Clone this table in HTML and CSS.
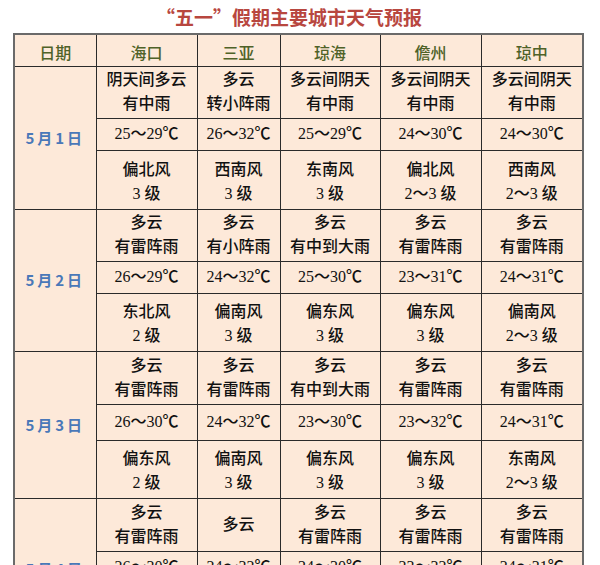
FILE: index.html
```html
<!DOCTYPE html>
<html lang="zh">
<head>
<meta charset="utf-8">
<link rel="stylesheet" href="styles.css">
</head>
<body>
<div class="page">
  <h1 class="title">“五一”假期主要城市天气预报</h1>
  <table class="wx">
    <colgroup>
      <col class="c-date"><col class="c-hk"><col class="c-sy"><col class="c-qh"><col class="c-dz"><col class="c-qz">
    </colgroup>
    <tr class="head">
      <th>日期</th><th>海口</th><th>三亚</th><th>琼海</th><th>儋州</th><th>琼中</th>
    </tr>

    <tr class="w h52">
      <td class="date" rowspan="3">5月1日</td>
      <td>阴天间多云<br>有中雨</td><td>多云<br>转小阵雨</td><td>多云间阴天<br>有中雨</td><td>多云间阴天<br>有中雨</td><td>多云间阴天<br>有中雨</td>
    </tr>
    <tr class="t h32">
      <td>25～29℃</td><td>26～32℃</td><td>25～29℃</td><td>24～30℃</td><td>24～30℃</td>
    </tr>
    <tr class="f h59">
      <td>偏北风<br>3 级</td><td>西南风<br>3 级</td><td>东南风<br>3 级</td><td>偏北风<br>2～3 级</td><td>西南风<br>2～3 级</td>
    </tr>

    <tr class="w h52">
      <td class="date" rowspan="3">5月2日</td>
      <td>多云<br>有雷阵雨</td><td>多云<br>有小阵雨</td><td>多云<br>有中到大雨</td><td>多云<br>有雷阵雨</td><td>多云<br>有雷阵雨</td>
    </tr>
    <tr class="t h32">
      <td>26～29℃</td><td>24～32℃</td><td>25～30℃</td><td>23～31℃</td><td>24～31℃</td>
    </tr>
    <tr class="f h58">
      <td>东北风<br>2 级</td><td>偏南风<br>3 级</td><td>偏东风<br>3 级</td><td>偏东风<br>3 级</td><td>偏南风<br>2～3 级</td>
    </tr>

    <tr class="w h53">
      <td class="date" rowspan="3">5月3日</td>
      <td>多云<br>有雷阵雨</td><td>多云<br>有雷阵雨</td><td>多云<br>有中到大雨</td><td>多云<br>有雷阵雨</td><td>多云<br>有雷阵雨</td>
    </tr>
    <tr class="t h36">
      <td>26～30℃</td><td>24～32℃</td><td>23～30℃</td><td>23～32℃</td><td>24～31℃</td>
    </tr>
    <tr class="f h58">
      <td>偏东风<br>2 级</td><td>偏南风<br>3 级</td><td>偏东风<br>3 级</td><td>偏东风<br>3 级</td><td>东南风<br>2～3 级</td>
    </tr>

    <tr class="w h53">
      <td class="date" rowspan="3">5月4日</td>
      <td>多云<br>有雷阵雨</td><td>多云</td><td>多云<br>有雷阵雨</td><td>多云<br>有雷阵雨</td><td>多云<br>有雷阵雨</td>
    </tr>
    <tr class="t h32">
      <td>26～30℃</td><td>24～32℃</td><td>24～30℃</td><td>23～32℃</td><td>24～31℃</td>
    </tr>
    <tr class="f h58">
      <td>偏东风<br>2 级</td><td>偏南风<br>3 级</td><td>偏东风<br>3 级</td><td>偏东风<br>3 级</td><td>东南风<br>2～3 级</td>
    </tr>
  </table>
</div>
</body>
</html>
```
FILE: styles.css
```css
html, body {
  margin: 0;
  padding: 0;
  background: #ffffff;
}
body {
  font-family: "Liberation Serif", "Noto Sans CJK SC", serif;
  color: #111111;
}
.page {
  width: 600px;
  height: 565px;
  overflow: hidden;
}
.title {
  margin: 0;
  height: 33px;
  box-sizing: border-box;
  padding: 5px 22px 0 0;
  text-align: center;
  font-family: "Noto Sans CJK SC", sans-serif;
  font-size: 19px;
  line-height: 24px;
  font-weight: bold;
  color: #b8473f;
}
.wx {
  margin-left: 13px;
  width: 571px;
  border-collapse: collapse;
  table-layout: fixed;
  background: #fde9d9;
  border: 2px solid #6a6a6a;
}
.c-date { width: 82px; }
.c-hk { width: 101px; }
.c-sy { width: 83px; }
.c-qh { width: 100px; }
.c-dz { width: 101px; }
.c-qz { width: 102px; }
.wx th, .wx td {
  border: 1px solid #2a2a2a;
  padding: 0;
  text-align: center;
  vertical-align: middle;
  font-size: 16px;
  line-height: 24px;
  font-weight: 500;
  white-space: nowrap;
  overflow: hidden;
}
.wx th {
  font-family: "Noto Sans CJK SC", sans-serif;
  color: #4f6228;
  font-weight: 500;
  padding-top: 4px;
}
.head { height: 32px; }
.wx td.date {
  font-family: "Noto Sans CJK SC", sans-serif;
  color: #4a78b8;
  font-size: 15px;
  letter-spacing: 3px;
  font-weight: bold;
}
.f td { padding-top: 4px; }
.h52 { height: 52px; }
.h53 { height: 53px; }
.h32 { height: 32px; }
.h36 { height: 36px; }
.h58 { height: 58px; }
.h59 { height: 59px; }
```
